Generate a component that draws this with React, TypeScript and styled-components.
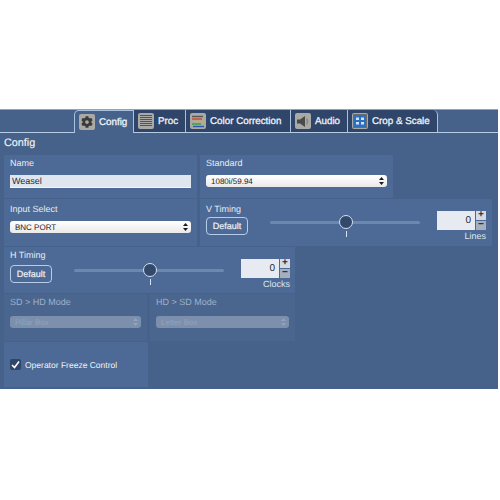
import styled, { createGlobalStyle } from "styled-components";
import { FaCog } from "react-icons/fa";

const Global = createGlobalStyle`
    html, body { margin: 0; padding: 0; background: #fff; }
    body { font-family: "Liberation Sans", Arial, sans-serif; text-rendering: geometricPrecision; }
`;

const Page = styled.div`
    width: 500px;
    height: 500px;
    padding-top: 109px;
    box-sizing: border-box;
    background: #fff;
`;

const Panel = styled.div`
    width: 498px;
    height: 280px;
    box-sizing: border-box;
    background: #46628a;
    border-top: 1px solid #8ea3bf;
    color: #eef2f7;
`;

const TabBar = styled.div`
    display: flex;
    height: 23px;
    box-sizing: border-box;
    padding-left: 74px;
    border-bottom: 1px solid #b5cbe6;
`;

const Tab = styled.div<{ $w: number; $active?: boolean; $last?: boolean }>`
    width: ${(p) => p.$w}px;
    height: ${(p) => (p.$active ? 23 : 22)}px;
    box-sizing: border-box;
    display: flex;
    align-items: center;
    gap: 4px;
    padding-left: 4px;
    font-size: 9.8px;
    white-space: nowrap;
    -webkit-text-stroke: 0.3px #eef2f7;
    background: ${(p) => (p.$active ? "#46628a" : "#2f4569")};
    border-right: 1px solid #a9c2e0;
    border-left: ${(p) => (p.$active ? "1px solid #a9c2e0" : "none")};
    border-top: ${(p) => (p.$active ? "1px solid #a9c2e0" : "none")};
    border-radius: ${(p) => (p.$active ? "5px 0 0 0" : p.$last ? "0 5px 0 0" : "0")};
`;

const TabIcon = styled.span`
    width: 16px;
    height: 16px;
    flex: none;
    display: flex;
    align-items: center;
    justify-content: center;
    border-radius: 2px;
    background: #a9a9a6;
    color: #3b3b3b;
`;

const Title = styled.div`
    height: 22px;
    padding: 3px 0 0 4px;
    box-sizing: border-box;
    font-size: 10.8px;
    line-height: 14px;
    -webkit-text-stroke: 0.15px #eef2f7;
`;

const Rows = styled.div`
    display: flex;
    flex-direction: column;
    gap: 1px;
    padding-left: 4px;
`;

const Row = styled.div`
    display: flex;
    gap: 3px;
`;

const Card = styled.div<{ $w: number; $h: number; $flat?: boolean; $top?: number }>`
    width: ${(p) => p.$w}px;
    height: ${(p) => p.$h}px;
    box-sizing: border-box;
    padding: ${(p) => p.$top ?? 3}px 6px 0;
    background: ${(p) => (p.$flat ? "#4a668e" : "#4c6a95")};
`;

const Label = styled.div<{ $off?: boolean }>`
    font-size: 9px;
    line-height: 11px;
    color: ${(p) => (p.$off ? "#9fb0c8" : "#e6ecf4")};
`;

const NameInput = styled.div`
    margin-top: 6px;
    height: 13px;
    box-sizing: border-box;
    padding-left: 2px;
    background: #dfe6f0;
    border-bottom: 1px solid #f4f7fa;
    color: #1d2a3c;
    font-size: 9px;
    line-height: 12px;
`;

const Select = styled.div<{ $off?: boolean; $gap?: number }>`
    margin-top: ${(p) => p.$gap ?? 8}px;
    height: 12px;
    box-sizing: border-box;
    display: flex;
    align-items: center;
    justify-content: space-between;
    padding: 0 3px 0 5px;
    border-radius: 3px;
    background: ${(p) => (p.$off ? "#7c90ad" : "linear-gradient(#ffffff, #e9e9e9)")};
    color: ${(p) => (p.$off ? "#93a3bb" : "#1b1b1b")};
    font-size: 8px;
`;

const Controls = styled.div<{ $up?: number }>`
    display: flex;
    align-items: flex-start;
    margin-top: ${(p) => -(p.$up ?? 0)}px;
`;

const DefaultButton = styled.div`
    margin-top: 4px;
    width: 42px;
    height: 18px;
    box-sizing: border-box;
    flex: none;
    border: 1px solid #b5cde9;
    border-radius: 4px;
    font-size: 9px;
    line-height: 16px;
    text-align: center;
    -webkit-text-stroke: 0.2px #eef2f7;
`;

const Slider = styled.div`
    position: relative;
    flex: none;
    width: 150px;
    height: 24px;
    margin-left: 22px;
`;

const Track = styled.div`
    margin-top: 8px;
    height: 3px;
    border-radius: 2px;
    background: #6c88ae;
`;

const Thumb = styled.div`
    position: absolute;
    left: 69px;
    top: 2px;
    width: 14px;
    height: 14px;
    box-sizing: border-box;
    border: 1px solid #d4e1f1;
    border-radius: 50%;
    background: #33496c;
`;

const Tick = styled.div`
    position: absolute;
    left: 76px;
    top: 18px;
    width: 1px;
    height: 6px;
    background: #d4e1f1;
`;

const Spin = styled.div`
    flex: none;
    margin-left: 17px;
    margin-top: -2px;
    width: 49px;
`;

const SpinRow = styled.div`
    display: flex;
    height: 19px;
`;

const SpinInput = styled.div`
    width: 38px;
    box-sizing: border-box;
    padding-right: 4px;
    background: #e7ebf1;
    color: #1d2a3c;
    font-size: 10px;
    line-height: 19px;
    text-align: right;
`;

const SpinButtons = styled.div`
    width: 10px;
    margin-left: 1px;
    display: flex;
    flex-direction: column;
    gap: 1px;
`;

const SpinButton = styled.div<{ $dim?: boolean }>`
    flex: 1;
    background: ${(p) => (p.$dim ? "#a5afbd" : "#d5dbe4")};
    color: #1f2c40;
    font-size: 10px;
    font-weight: 700;
    line-height: 8px;
    text-align: center;
`;

const Unit = styled.div`
    margin-top: 1px;
    width: 49px;
    font-size: 9px;
    line-height: 11px;
    text-align: right;
    color: #dfe6f0;
`;

const CheckRow = styled.div`
    display: flex;
    align-items: center;
    gap: 4px;
    margin-top: 14px;
    font-size: 8.5px;
    color: #eef2f7;
`;

const CheckBox = styled.span`
    width: 11px;
    height: 11px;
    flex: none;
    display: flex;
    align-items: center;
    justify-content: center;
    border-radius: 2px;
    background: #2f4569;
`;

const Arrows = () => (
    <svg width="5" height="8" viewBox="0 0 5 8">
        <path d="M2.5 0 5 3H0zM2.5 8 0 5h5z" fill="currentColor" />
    </svg>
);

const ProcIcon = () => (
    <svg width="12" height="12" viewBox="0 0 12 12">
        {[0.5, 2.5, 4.5, 6.5, 8.5, 10.5].map((y) => (
            <path key={y} d={`M0 ${y}H12`} stroke="#55554f" strokeWidth="1" />
        ))}
    </svg>
);

const ColorIcon = () => (
    <svg width="13" height="13" viewBox="0 0 13 13">
        <path d="M0 1.5H11" stroke="#555" strokeWidth="1.4" />
        <path d="M0 4H10" stroke="#c9452f" strokeWidth="1.4" />
        <path d="M2 6.5H13" stroke="#d8b02c" strokeWidth="1.4" />
        <path d="M0 9H9" stroke="#3a9a45" strokeWidth="1.4" />
        <path d="M1 11.5H12" stroke="#2f58b0" strokeWidth="1.4" />
    </svg>
);

const SpeakerIcon = () => (
    <svg width="13" height="13" viewBox="0 0 13 13">
        <path d="M0 4.5H3L8 1V12L3 8.500H0z" fill="#4a4a48" />
        <path d="M9.500 2.500C12 5 12 8 9.500 10.500z" fill="#878784" />
    </svg>
);

const CropIcon = () => (
    <svg width="14" height="14" viewBox="0 0 14 14">
        <rect x="0.500" y="0.500" width="13" height="13" fill="#2f6fc0" stroke="#6d6d68" />
        <path d="M3 3.500H6V6H3zM8 3.500H11V6H8zM3 8H6V10.500H3zM8 8H11V10.500H8z" fill="#cfe3f7" />
    </svg>
);

const TimingControls = ({ unit, up }: { unit: string; up?: number }) => (
    <Controls $up={up}>
        <DefaultButton>Default</DefaultButton>
        <Slider>
            <Track />
            <Thumb />
            <Tick />
        </Slider>
        <Spin>
            <SpinRow>
                <SpinInput>0</SpinInput>
                <SpinButtons>
                    <SpinButton>+</SpinButton>
                    <SpinButton $dim>−</SpinButton>
                </SpinButtons>
            </SpinRow>
            <Unit>{unit}</Unit>
        </Spin>
    </Controls>
);

export default function App() {
    return (
        <Page>
            <Global />
            <Panel>
                <TabBar>
                    <Tab $w={60} $active>
                        <TabIcon><FaCog size={12} /></TabIcon>
                        Config
                    </Tab>
                    <Tab $w={52}>
                        <TabIcon><ProcIcon /></TabIcon>
                        Proc
                    </Tab>
                    <Tab $w={105}>
                        <TabIcon><ColorIcon /></TabIcon>
                        Color Correction
                    </Tab>
                    <Tab $w={57}>
                        <TabIcon><SpeakerIcon /></TabIcon>
                        Audio
                    </Tab>
                    <Tab $w={90} $last>
                        <TabIcon><CropIcon /></TabIcon>
                        Crop &amp; Scale
                    </Tab>
                </TabBar>
                <Title>Config</Title>
                <Rows>
                    <Row>
                        <Card $w={193} $h={43}>
                            <Label>Name</Label>
                            <NameInput>Weasel</NameInput>
                        </Card>
                        <Card $w={193} $h={43}>
                            <Label>Standard</Label>
                            <Select $gap={6}>1080i/59.94<Arrows /></Select>
                        </Card>
                    </Row>
                    <Row>
                        <Card $w={193} $h={47} $top={5}>
                            <Label>Input Select</Label>
                            <Select $gap={6}>BNC PORT<Arrows /></Select>
                        </Card>
                        <Card $w={292} $h={47} $top={5}>
                            <Label>V Timing</Label>
                            <TimingControls unit="Lines" up={2} />
                        </Card>
                    </Row>
                    <Row>
                        <Card $w={291} $h={46}>
                            <Label>H Timing</Label>
                            <TimingControls unit="Clocks" />
                        </Card>
                    </Row>
                    <Row>
                        <Card $w={143} $h={47} $flat>
                            <Label $off>SD &gt; HD Mode</Label>
                            <Select $off>Pillar Box<Arrows /></Select>
                        </Card>
                        <Card $w={145} $h={47} $flat>
                            <Label $off>HD &gt; SD Mode</Label>
                            <Select $off>Letter Box<Arrows /></Select>
                        </Card>
                    </Row>
                    <Row>
                        <Card $w={144} $h={45}>
                            <CheckRow>
                                <CheckBox>
                                    <svg width="9" height="9" viewBox="0 0 9 9">
                                        <path d="M1 5 3.500 7.500 8 1.500" fill="none" stroke="#fff" strokeWidth="1.6" />
                                    </svg>
                                </CheckBox>
                                Operator Freeze Control
                            </CheckRow>
                        </Card>
                    </Row>
                </Rows>
            </Panel>
        </Page>
    );
}
